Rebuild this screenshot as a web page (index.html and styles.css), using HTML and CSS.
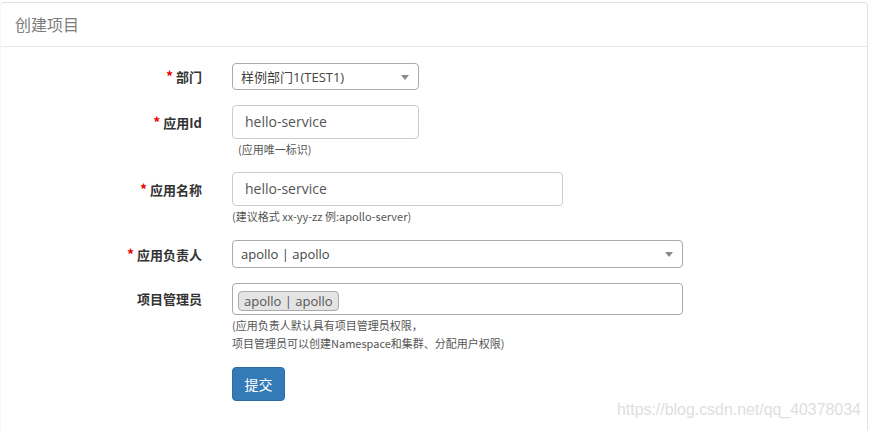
FILE: index.html
```
<!DOCTYPE html>
<html lang="zh">
<head>
<meta charset="utf-8">
<title>创建项目</title>
<link rel="stylesheet" href="styles.css">
</head>
<body>
<div class="panel">
  <div class="panel-heading">创建项目</div>
  <div class="panel-body">
    <div class="form-group">
      <label class="control-label"><span class="req">*</span> 部门</label>
      <div class="select w187"><span class="select-text">样例部门1(TEST1)</span><span class="arrow"></span></div>
    </div>
    <div class="form-group">
      <label class="control-label"><span class="req">*</span> 应用Id</label>
      <div class="input w187 h34">hello-service</div>
      <div class="help indent">(应用唯一标识)</div>
    </div>
    <div class="form-group gap16">
      <label class="control-label"><span class="req">*</span> 应用名称</label>
      <div class="input w331 h34">hello-service</div>
      <div class="help">(建议格式 xx-yy-zz 例:apollo-server)</div>
    </div>
    <div class="form-group">
      <label class="control-label"><span class="req">*</span> 应用负责人</label>
      <div class="select w451 h28"><span class="select-text">apollo | apollo</span><span class="arrow"></span></div>
    </div>
    <div class="form-group">
      <label class="control-label">项目管理员</label>
      <div class="multi w451"><span class="tag">apollo | apollo</span></div>
      <div class="help tall">(应用负责人默认具有项目管理员权限，<br>项目管理员可以创建Namespace和集群、分配用户权限)</div>
    </div>
    <div class="form-group">
      <span></span>
      <button class="btn">提交</button>
    </div>
  </div>
  <div class="watermark">https://blog.csdn.net/qq_40378034</div>
</div>
</body>
</html>
```
FILE: styles.css
```
* { box-sizing: border-box; }
html, body { margin: 0; padding: 0; background: #fff; }
body {
  font-family: "Open Sans", "Noto Sans CJK SC", sans-serif;
  color: #333;
  width: 869px;
  height: 430px;
  overflow: hidden;
}
.panel {
  position: relative;
  margin-top: 2px;
  width: 868px;
  height: 440px;
  border: 1px solid #e2e2e6;
  border-left-color: #f6f6f8;
  border-radius: 4px;
}
.panel-heading {
  height: 44px;
  padding-left: 14px;
  font-size: 16px;
  line-height: 43px;
  color: #7d7d7d;
  border-bottom: 1px solid #e8e8ee;
  font-family: "Noto Sans CJK SC", sans-serif;
}
.panel-body {
  padding-top: 16px;
}
.form-group {
  display: grid;
  grid-template-columns: 231px auto;
  justify-items: start;
  margin-bottom: 15px;
}
.form-group.gap16 { margin-bottom: 16px; }
.control-label {
  grid-column: 1;
  grid-row: 1;
  align-self: center;
  justify-self: end;
  padding-right: 30px;
  font-size: 13px;
  font-weight: bold;
  color: #333;
  font-family: "Noto Sans CJK SC", sans-serif;
  line-height: 18px;
}
.req { color: #e00; font-size: 14px; }
.select, .input, .multi, .btn { grid-column: 2; grid-row: 1; }
.help {
  grid-column: 2;
  grid-row: 2;
  margin-top: 2px;
  font-size: 11px;
  line-height: 16px;
  color: #555;
  font-family: "Noto Sans CJK SC", sans-serif;
}
.help.indent { padding-left: 6px; }
.help.tall { line-height: 18px; margin-top: 1px; }
.w187 { width: 187px; }
.w331 { width: 331px; }
.w451 { width: 451px; }
.h34 { height: 34px; }
.h28 { height: 28px; }
.select {
  position: relative;
  height: 27px;
  border: 1px solid #aaa;
  border-radius: 4px;
  display: flex;
  align-items: center;
  padding-left: 8px;
}
.select.h28 { height: 28px; }
.select-text { font-size: 13px; color: #444; }
.arrow {
  position: absolute;
  right: 9px;
  top: 50%;
  margin-top: -2px;
  width: 0;
  height: 0;
  border-style: solid;
  border-width: 5px 4px 0 4px;
  border-color: #888 transparent transparent transparent;
}
.input {
  border: 1px solid #ccc;
  border-radius: 4px;
  padding-left: 12px;
  font-size: 14px;
  line-height: 32px;
  color: #555;
}
.multi {
  height: 32px;
  border: 1px solid #aaa;
  border-radius: 4px;
  padding: 5px 5px;
}
.tag {
  display: inline-block;
  height: 20px;
  padding: 0 5px;
  background: #e4e4e4;
  border: 1px solid #aaa;
  border-radius: 4px;
  font-size: 13px;
  line-height: 18px;
  color: #555;
}
.btn {
  width: 53px;
  height: 34px;
  padding: 0;
  background: #337ab7;
  border: 1px solid #2e6da4;
  border-radius: 4px;
  color: #fff;
  font-size: 14px;
  font-family: "Noto Sans CJK SC", sans-serif;
}
.watermark {
  position: absolute;
  left: 616px;
  top: 398px;
  font-family: "Liberation Sans", Arial, sans-serif;
  font-size: 15.9px;
  color: #dedede;
  white-space: nowrap;
}
```
